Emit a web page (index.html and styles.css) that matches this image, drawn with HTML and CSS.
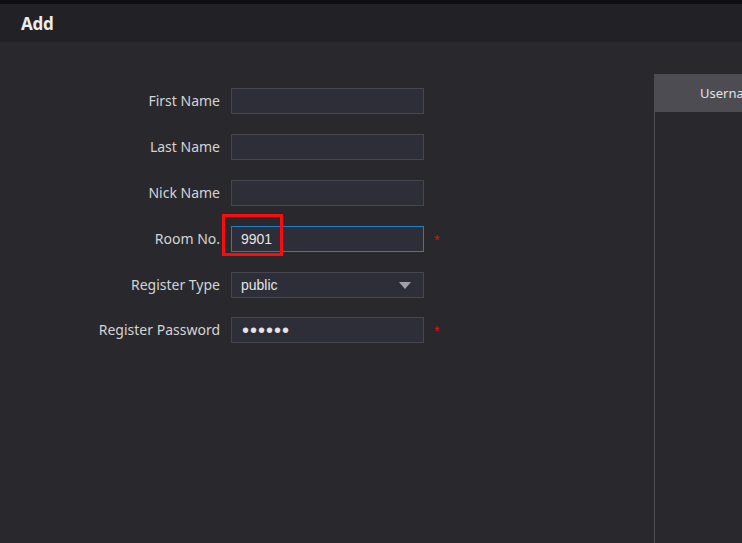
FILE: index.html
```html
<!DOCTYPE html>
<html lang="en">
<head>
  <meta charset="UTF-8" />
  <meta name="viewport" content="width=device-width, initial-scale=1.0" />
  <title>Add</title>
  <link rel="stylesheet" href="styles.css">
</head>
<body>
  <div class="top-strip"></div>
  <header class="dialog-header">
    <h1>Add</h1>
  </header>

  <div class="content">
    <div class="form-area">
      <div class="form-row">
        <label class="form-label">First Name</label>
        <div class="field"><input type="text" class="text-input"></div>
      </div>
      <div class="form-row">
        <label class="form-label">Last Name</label>
        <div class="field"><input type="text" class="text-input"></div>
      </div>
      <div class="form-row">
        <label class="form-label">Nick Name</label>
        <div class="field"><input type="text" class="text-input"></div>
      </div>
      <div class="form-row">
        <label class="form-label">Room No.</label>
        <div class="field">
          <input type="text" class="text-input active" value="9901">
          <span class="mark-box"></span>
        </div>
        <span class="required">*</span>
      </div>
      <div class="form-row">
        <label class="form-label">Register Type</label>
        <div class="field">
          <div class="select-box">
            <span>public</span>
            <span class="arrow"></span>
          </div>
        </div>
      </div>
      <div class="form-row">
        <label class="form-label">Register Password</label>
        <div class="field"><input type="password" class="text-input" value="123456"></div>
        <span class="required">*</span>
      </div>
    </div>

    <div class="list-panel">
      <div class="list-header">
        <div class="list-col">Username</div>
      </div>
    </div>
  </div>
</body>
</html>
```

FILE: styles.css
```css
body {
  margin: 0;
  padding: 0;
  background: #28282d;
  font-family: "Noto Sans", "Open Sans", sans-serif;
  color: #d2d2d4;
  overflow: hidden;
  height: 543px;
}
.top-strip {
  height: 4px;
  background: #0e0f13;
}
.dialog-header {
  height: 38px;
  background: #222226;
  display: flex;
  align-items: center;
  padding-left: 21px;
}
.dialog-header h1 {
  margin: 0;
  font-family: "Noto Sans", sans-serif;
  font-size: 17px;
  font-weight: bold;
  color: #ececec;
  letter-spacing: -0.2px;
}
.content {
  display: flex;
  height: 501px;
}
.form-area {
  width: 654px;
  flex-shrink: 0;
  padding-top: 46px;
  display: flex;
  flex-direction: column;
  gap: 20px;
}
.form-row {
  display: flex;
  align-items: center;
  height: 26px;
}
.form-row:last-child {
  margin-top: -1px;
}
.form-label {
  width: 220px;
  text-align: right;
  font-size: 14px;
  color: #d4d4d6;
  margin-right: 11px;
  margin-top: -2px;
}
.field {
  position: relative;
  width: 193px;
  height: 26px;
}
.text-input {
  box-sizing: border-box;
  width: 100%;
  height: 26px;
  margin: 0;
  padding: 0 9px;
  background: #2e2e38;
  border: 1px solid #46464f;
  color: #e4e4e4;
  font-family: "Liberation Sans", Arial, sans-serif;
  font-size: 14px;
  outline: none;
}
.text-input.active {
  border-color: #1e7ec8;
}
.text-input[type="password"] {
  font-size: 20px;
  letter-spacing: 1px;
  padding-left: 10px;
  padding-top: 1px;
}
.mark-box {
  position: absolute;
  left: -9px;
  top: -12px;
  width: 55px;
  height: 36px;
  border: 3px solid #f70d0d;
}
.required {
  color: #e40d0d;
  font-family: "Liberation Sans", Arial, sans-serif;
  font-size: 14px;
  margin-left: 10px;
  margin-top: 2px;
}
.select-box {
  box-sizing: border-box;
  height: 26px;
  padding: 0 12px 0 9px;
  background: #2e2e38;
  border: 1px solid #46464f;
  display: flex;
  align-items: center;
  justify-content: space-between;
  font-family: "Liberation Sans", Arial, sans-serif;
  font-size: 14px;
  color: #e4e4e4;
}
.arrow {
  width: 0;
  height: 0;
  border-left: 6px solid transparent;
  border-right: 6px solid transparent;
  border-top: 7px solid #a0a0ac;
}
.list-panel {
  flex: 1;
  margin-top: 32px;
  border-left: 1px solid #4c4c52;
  overflow: hidden;
}
.list-header {
  height: 38px;
  background: #4c4c52;
  display: flex;
  align-items: center;
  width: 400px;
}
.list-col {
  padding-left: 45px;
  font-size: 13px;
  color: #e2e2e4;
  white-space: nowrap;
}
```
